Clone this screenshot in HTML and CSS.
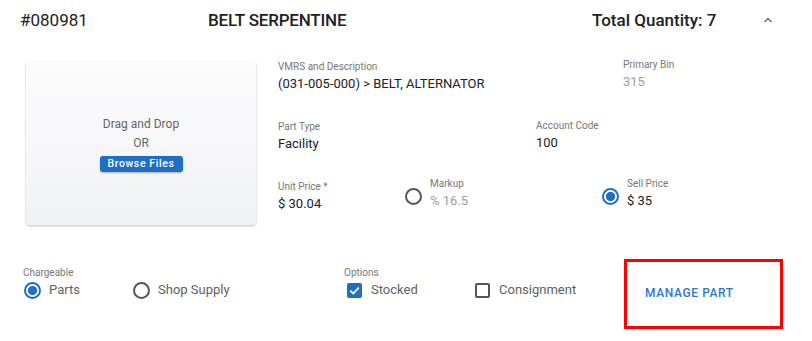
FILE: index.html
```html
<!DOCTYPE html>
<html lang="en">

<head>
    <meta charset="UTF-8">
    <meta name="viewport" content="width=device-width, initial-scale=1.0">
    <title>Part</title>
    <link rel="stylesheet" href="styles.css">
</head>

<body>

    <div class="part">
        <!-- HEADER -->
        <div class="part-head">
            <span class="part-no">#080981</span>
            <span class="part-name">BELT SERPENTINE</span>
            <span class="part-qty">Total Quantity: 7</span>
            <svg class="chevron" width="12" height="8" viewBox="0 0 12 8">
                <path d="M2.5 6 L6 2.5 L9.5 6" fill="none" stroke="#666" stroke-width="1.4"/>
            </svg>
        </div>

        <div class="part-body">
            <!-- DROP ZONE -->
            <div class="dropzone">
                <p>Drag and Drop</p>
                <p>OR</p>
                <button class="browse">Browse Files</button>
            </div>

            <div class="fields">
                <div class="row">
                    <div class="field w-vmrs">
                        <div class="label">VMRS and Description</div>
                        <div class="value">(031-005-000) &gt; BELT, ALTERNATOR</div>
                    </div>
                    <div class="field up">
                        <div class="label">Primary Bin</div>
                        <div class="value muted">315</div>
                    </div>
                </div>
                <div class="row">
                    <div class="field w-type">
                        <div class="label">Part Type</div>
                        <div class="value">Facility</div>
                    </div>
                    <div class="field up1">
                        <div class="label">Account Code</div>
                        <div class="value">100</div>
                    </div>
                </div>
                <div class="row">
                    <div class="field w-unit">
                        <div class="label">Unit Price *</div>
                        <div class="value">$ 30.04</div>
                    </div>
                    <div class="price-opt w-markup">
                        <span class="radio"></span>
                        <div class="field">
                            <div class="label">Markup</div>
                            <div class="value muted">% 16.5</div>
                        </div>
                    </div>
                    <div class="price-opt">
                        <span class="radio on"></span>
                        <div class="field">
                            <div class="label">Sell Price</div>
                            <div class="value">$ 35</div>
                        </div>
                    </div>
                </div>
            </div>
        </div>

        <!-- FOOTER -->
        <div class="part-foot">
            <div class="group w-charge">
                <div class="label">Chargeable</div>
                <div class="choices">
                    <label class="choice w-parts"><span class="radio on"></span>Parts</label>
                    <label class="choice"><span class="radio"></span>Shop Supply</label>
                </div>
            </div>
            <div class="group w-options">
                <div class="label">Options</div>
                <div class="choices">
                    <label class="choice w-stocked">
                        <span class="check on">
                            <svg width="15" height="15" viewBox="0 0 15 15"><path d="M3.2 7.6 L6.2 10.5 L11.8 4.6" fill="none" stroke="#fff" stroke-width="1.8"/></svg>
                        </span>Stocked</label>
                    <label class="choice"><span class="check"></span>Consignment</label>
                </div>
            </div>
            <div class="manage">
                <a href="#" class="manage-btn">MANAGE PART</a>
            </div>
        </div>
    </div>

</body>

</html>
```

FILE: styles.css
```css
*{
    padding: 0;
    margin: 0;
    box-sizing: border-box;
}
body{
    font-family: Roboto, "Liberation Sans", sans-serif;
    color: #212121;
    background: #fff;
}
.part{
    width: 812px;
}
.part-head{
    display: flex;
    align-items: center;
    padding: 10px 0 0 20px;
    height: 30px;
    font-size: 17px;
    line-height: 20px;
    font-weight: 500;
}
.part-no{
    width: 188px;
    font-weight: 400;
}
.part-name{
    flex: 1;
    letter-spacing: -0.2px;
}
.part-qty{
    width: 170px;
}
.chevron{
    margin-right: 38px;
}
.part-body{
    display: flex;
    align-items: flex-start;
    margin-top: 30px;
    padding-left: 26px;
}
.dropzone{
    width: 230px;
    height: 164px;
    margin-top: 1px;
    border-radius: 4px;
    background: linear-gradient(#fcfcfd, #f1f2f5);
    box-shadow: 0 1px 3px rgba(0,0,0,0.18), 0 1px 1px rgba(0,0,0,0.08);
    display: flex;
    flex-direction: column;
    align-items: center;
    justify-content: center;
    color: #666;
    font-size: 12px;
    line-height: 19px;
}
.browse{
    margin-top: 3px;
    height: 16px;
    width: 83px;
    border: none;
    border-radius: 3px;
    background: #1f6fc5;
    color: #fff;
    font-family: Roboto, sans-serif;
    font-size: 10.5px;
    font-weight: 500;
    letter-spacing: 0.6px;
    box-shadow: 0 1px 2px rgba(0,0,0,0.3);
}
.fields{
    margin-left: 22px;
    flex: 1;
}
.row{
    display: flex;
    align-items: flex-start;
    margin-bottom: 27px;
}
.label{
    font-size: 10px;
    line-height: 13px;
    color: #777;
    margin-bottom: 2px;
}
.value{
    font-size: 13px;
    line-height: 18px;
    color: #212121;
}
.muted{
    color: #9e9e9e;
}
.up{
    margin-top: -2px;
}
.up1{
    margin-top: -1px;
}
.w-vmrs{ width: 345px; }
.w-type{ width: 258px; }
.w-unit{ width: 127px; }
.w-markup{ width: 197px; }
.price-opt{
    display: flex;
    align-items: center;
    margin-top: -3px;
}
.price-opt .radio{
    margin-right: 8px;
    margin-top: 5px;
}
.radio{
    display: inline-block;
    width: 17px;
    height: 17px;
    border: 2px solid #555;
    border-radius: 50%;
    flex-shrink: 0;
}
.radio.on{
    border-color: #1f6fc5;
    background: radial-gradient(circle, #1f6fc5 0 4.3px, transparent 4.8px);
}
.part-foot{
    display: flex;
    align-items: flex-start;
    padding-left: 23px;
    margin-top: 19px;
}
.group{
    margin-top: 7px;
}
.w-charge{ width: 321px; }
.w-options{ width: 280px; }
.choices{
    display: flex;
    align-items: center;
    margin-top: 2px;
}
.choice{
    display: flex;
    align-items: center;
    font-size: 13px;
    line-height: 18px;
    color: #616161;
}
.choice .radio{
    margin-left: 1px;
    margin-right: 8px;
}
.w-parts{ width: 109px; }
.w-stocked{ width: 128px; }
.check{
    display: inline-block;
    width: 15px;
    height: 15px;
    border: 2px solid #555;
    border-radius: 2px;
    margin-left: 3px;
    margin-right: 9px;
    flex-shrink: 0;
}
.check.on{
    border: none;
    background: #1f6fc5;
}
.check svg{
    display: block;
}
.manage{
    width: 159px;
    height: 70px;
    border: 3px solid #ff0000;
    display: flex;
    align-items: center;
    padding-left: 18px;
}
.manage-btn{
    color: #2f78c8;
    text-decoration: none;
    font-size: 12px;
    font-weight: 500;
    letter-spacing: 0.6px;
    margin-top: -2px;
}
```
